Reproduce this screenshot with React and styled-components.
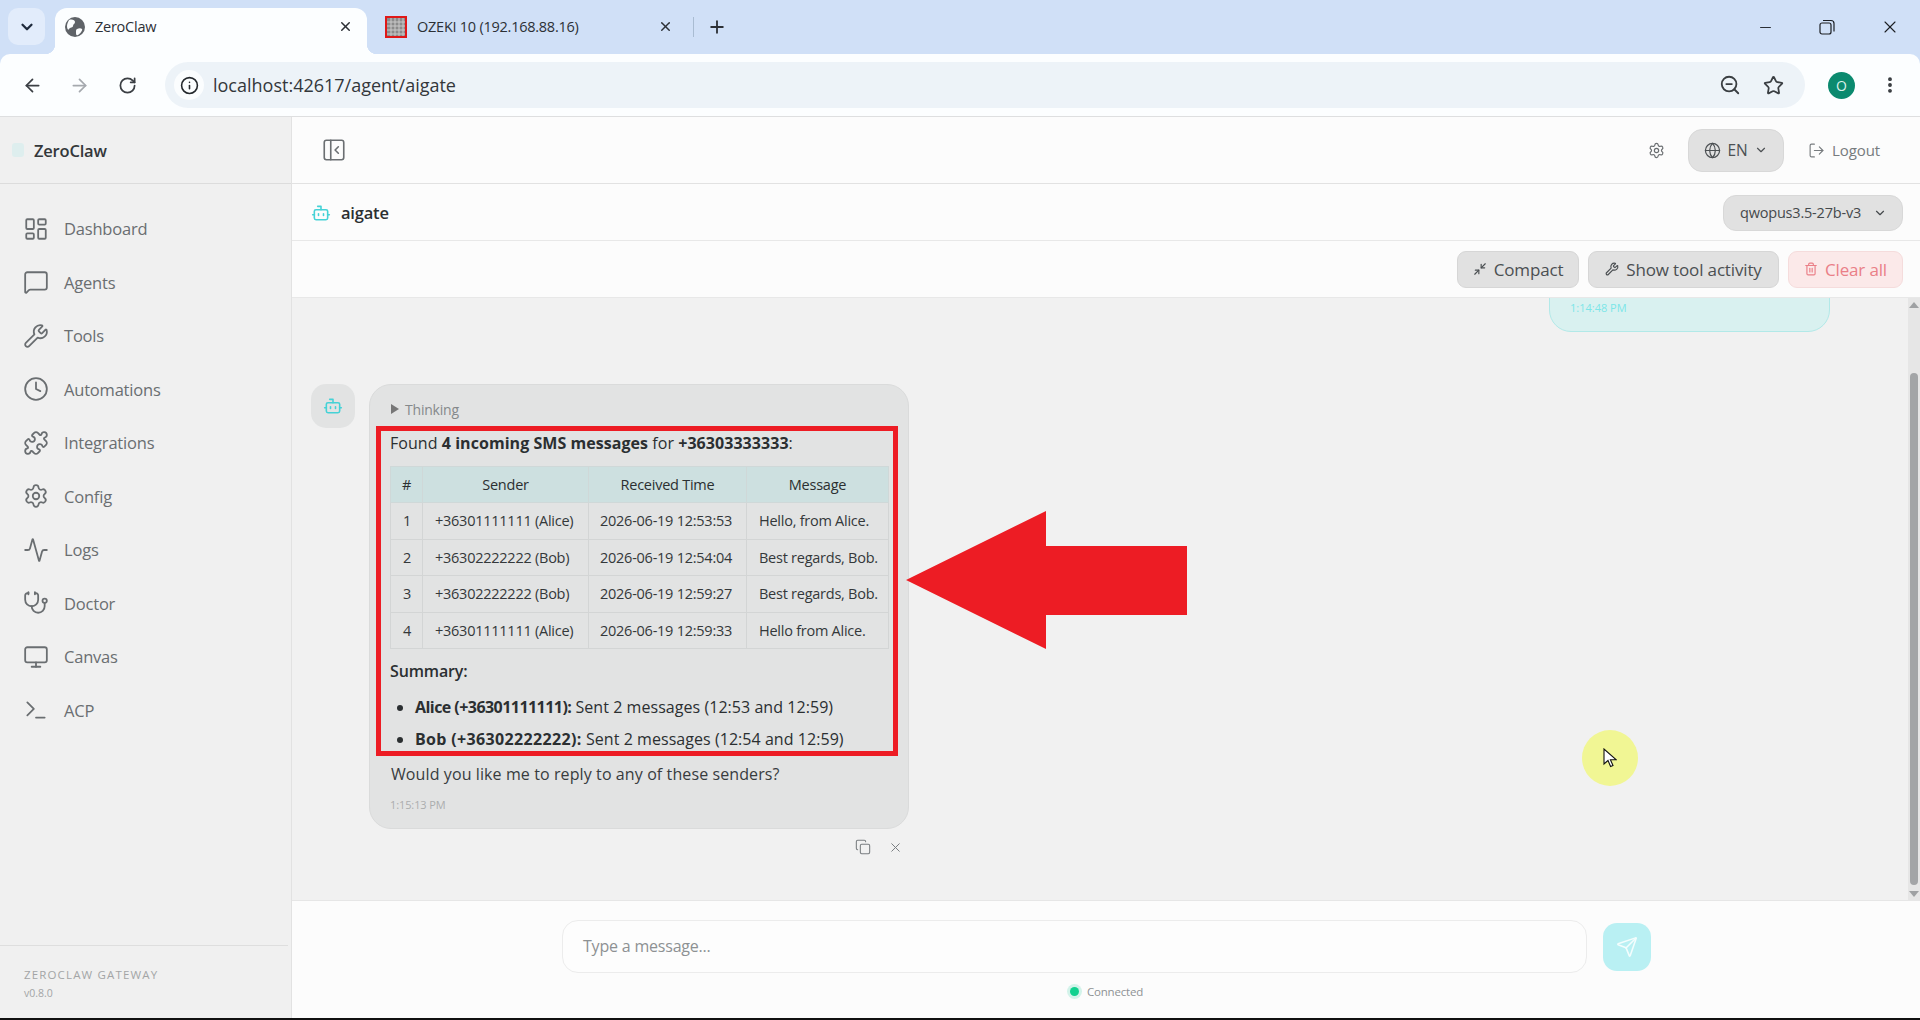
import React from "react";
import styled, { createGlobalStyle } from "styled-components";
import {
  Activity,
  ArrowLeft,
  ArrowRight,
  Bot,
  ChevronDown,
  Clock,
  Copy,
  Globe,
  Info,
  LayoutDashboard,
  LogOut,
  MessageSquare,
  Minimize2,
  Minus,
  Monitor,
  MoreVertical,
  PanelLeftClose,
  Plus,
  Puzzle,
  RotateCw,
  Send,
  Settings,
  Star,
  Stethoscope,
  Terminal,
  Trash2,
  Wrench,
  X,
  ZoomOut,
} from "lucide-react";

const GlobalStyle = createGlobalStyle`
  html, body {
    margin: 0;
    height: 100%;
    overflow: hidden;
    background: #fff;
  }
  body {
    font-family: "Open Sans", "Liberation Sans", sans-serif;
    color: #2b2f31;
  }
  * { box-sizing: border-box; }
`;

const Screen = styled.div`
  position: relative;
  width: 100vw;
  height: 100vh;
  display: flex;
  flex-direction: column;
  background: #d0e0f7;
  border-bottom: 2px solid #111;
`;

/* browser chrome */
const TabStrip = styled.div`
  height: 54px;
  flex: none;
  display: flex;
  align-items: flex-end;
  padding-left: 8px;
  background: #d0e0f7;
`;
const TabSearch = styled.div`
  width: 37px;
  height: 37px;
  margin-bottom: 9px;
  border-radius: 10px;
  background: #e2ecfb;
  display: flex;
  align-items: center;
  justify-content: center;
  color: #1f2a3c;
`;
const Tab = styled.div`
  position: relative;
  width: ${(p) => p.$width}px;
  height: 46px;
  margin-left: ${(p) => p.$gap}px;
  padding: 0 14px 9px 10px;
  display: flex;
  align-items: center;
  gap: 10px;
  border-radius: 12px 12px 0 0;
  background: ${(p) => (p.$active ? "#fcfeff" : "transparent")};
  font-size: 14.5px;
  letter-spacing: -0.25px;
  color: #2c3036;
  ${(p) =>
    p.$active &&
    `
    &::before, &::after {
      content: "";
      position: absolute;
      bottom: 0;
      width: 10px;
      height: 10px;
    }
    &::before {
      left: -10px;
      background: radial-gradient(circle at 0 0, transparent 10px, #fcfeff 10.5px);
    }
    &::after {
      right: -10px;
      background: radial-gradient(circle at 100% 0, transparent 10px, #fcfeff 10.5px);
    }
  `}
`;
const TabTitle = styled.span`
  flex: 1;
  white-space: nowrap;
`;
const TabDivider = styled.div`
  width: 1px;
  height: 20px;
  margin: 0 0 17px 6px;
  background: #a9bcd2;
`;
const NewTab = styled.div`
  margin: 0 0 17px 13px;
  display: flex;
  color: #2c3036;
`;
const WindowControls = styled.div`
  margin-left: auto;
  height: 100%;
  display: flex;
  align-items: center;
  gap: 45px;
  padding-right: 20px;
  color: #1c1f23;
`;
const AddressRow = styled.div`
  height: 63px;
  flex: none;
  display: flex;
  align-items: center;
  padding-left: 22px;
  background: #fcfeff;
  border-bottom: 1px solid #dedfe0;
  border-radius: 10px 10px 0 0;
`;
const NavButton = styled.div`
  display: flex;
  width: ${(p) => p.$width}px;
  color: ${(p) => (p.$dim ? "#a5a9ae" : "#3b3f44")};
`;
const Omnibox = styled.div`
  width: 1640px;
  height: 46px;
  margin-left: 15px;
  display: flex;
  align-items: center;
  padding: 0 21px 0 9px;
  border-radius: 23px;
  background: #edf3f8;
  color: #24282c;
`;
const SiteInfo = styled.div`
  width: 30px;
  height: 30px;
  margin-right: 9px;
  display: flex;
  align-items: center;
  justify-content: center;
  border-radius: 50%;
  background: #fbfdfe;
`;
const Url = styled.span`
  flex: 1;
  font-size: 18px;
  color: #33373b;
`;
const OmniActions = styled.div`
  display: flex;
  align-items: center;
  gap: 22px;
  color: #3a3e42;
`;
const Avatar = styled.div`
  width: 27px;
  height: 27px;
  margin-left: 23px;
  display: flex;
  align-items: center;
  justify-content: center;
  border-radius: 50%;
  background: #0b8a6f;
  color: #d9f1ea;
  font-size: 14px;
`;
const ChromeMenu = styled.div`
  display: flex;
  margin-left: 25px;
  color: #33373b;
`;

/* page */
const AppBody = styled.div`
  flex: 1;
  min-height: 0;
  display: flex;
`;
const Sidebar = styled.aside`
  width: 292px;
  flex: none;
  display: flex;
  flex-direction: column;
  background: #f0f0f0;
  border-right: 1px solid #e2e2e2;
`;
const Brand = styled.div`
  height: 67px;
  flex: none;
  display: flex;
  align-items: center;
  gap: 10px;
  padding-left: 12px;
  border-bottom: 1px solid #dcdcdc;
  font-size: 16.5px;
  font-weight: 600;
  letter-spacing: -0.2px;
  color: #33373a;
`;
const BrandMark = styled.div`
  width: 12px;
  height: 14px;
  border-radius: 3px;
  background: #deeeee;
`;
const Nav = styled.nav`
  padding-top: 18px;
`;
const NavItem = styled.div`
  height: 53.5px;
  display: flex;
  align-items: center;
  gap: 15px;
  padding-left: 23px;
  font-size: 16.5px;
  font-weight: 500;
  letter-spacing: -0.2px;
  color: #6a6e71;
`;
const SidebarFooter = styled.div`
  margin-top: auto;
  margin-right: 3px;
  height: 73px;
  padding: 21px 0 0 24px;
  border-top: 1px solid #dedede;
`;
const GatewayLabel = styled.div`
  font-size: 11.5px;
  line-height: 16px;
  letter-spacing: 1.15px;
  color: #a3a5a6;
`;
const VersionLabel = styled.div`
  font-size: 10.5px;
  line-height: 16px;
  margin-top: 2px;
  color: #a3a5a6;
`;
const Main = styled.main`
  flex: 1;
  min-width: 0;
  display: flex;
  flex-direction: column;
  background: #fcfcfc;
`;
const Header = styled.header`
  height: 67px;
  flex: none;
  display: flex;
  align-items: center;
  padding: 0 40px 0 29px;
  border-bottom: 1px solid #e2e2e2;
  color: #6b6f72;
`;
const HeaderSpacer = styled.div`
  flex: 1;
`;
const LangButton = styled.div`
  width: 96px;
  height: 43px;
  margin: 0 24px 0 23px;
  display: flex;
  align-items: center;
  justify-content: center;
  gap: 6px;
  border: 1px solid #d8d8d8;
  border-radius: 14px;
  background: #e1e1e1;
  font-size: 15.5px;
  color: #4c5053;
`;
const LogoutButton = styled.div`
  display: flex;
  align-items: center;
  gap: 7px;
  font-size: 15px;
  letter-spacing: -0.1px;
  color: #777b7e;
`;
const AgentBar = styled.div`
  height: 57px;
  flex: none;
  display: flex;
  align-items: center;
  padding: 1px 17px 0 19px;
  border-bottom: 1px solid #e8e8e8;
`;
const AgentName = styled.span`
  margin-left: 10px;
  font-size: 16.5px;
  font-weight: 600;
  letter-spacing: -0.2px;
  color: #2b2f31;
`;
const ModelSelect = styled.div`
  width: 180px;
  height: 36px;
  margin-left: auto;
  display: flex;
  align-items: center;
  justify-content: space-between;
  padding: 0 15px 0 16px;
  border: 1px solid #d8d8d8;
  border-radius: 13px;
  background: #e1e1e1;
  font-size: 14.5px;
  letter-spacing: -0.2px;
  color: #45494c;
`;
const Toolbar = styled.div`
  height: 57px;
  flex: none;
  display: flex;
  align-items: center;
  justify-content: flex-end;
  gap: 9px;
  padding-right: 17px;
  border-bottom: 1px solid #e8e8e8;
`;
const ToolButton = styled.div`
  width: ${(p) => p.$width}px;
  height: 37px;
  display: flex;
  align-items: center;
  justify-content: center;
  gap: 7px;
  border: 1px solid ${(p) => (p.$danger ? "#f5dcdc" : "#d6d6d6")};
  border-radius: 9px;
  background: ${(p) => (p.$danger ? "#fbe9e9" : "#e1e1e1")};
  font-size: 17px;
  font-weight: 500;
  letter-spacing: -0.15px;
  color: ${(p) => (p.$danger ? "#ea7f87" : "#4b4f52")};
`;
const ChatPane = styled.div`
  flex: 1;
  min-height: 0;
  display: flex;
  background: #f1f1f1;
  border-bottom: 1px solid #e6e6e6;
`;
const Messages = styled.div`
  flex: 1;
  min-width: 0;
  display: flex;
  flex-direction: column;
  justify-content: flex-end;
  overflow: hidden;
  padding: 0 78px 44px 19px;
`;
const UserBubble = styled.div`
  align-self: flex-end;
  flex: none;
  width: 281px;
  height: 90px;
  padding: 57px 20px 0;
  border: 1px solid #b2e9e8;
  border-radius: 22px;
  background: #d9f1f0;
`;
const UserTime = styled.div`
  font-size: 11px;
  line-height: 16px;
  color: #7ce6e8;
`;
const AssistantRow = styled.div`
  flex: none;
  display: flex;
  gap: 14px;
  margin-top: 52px;
`;
const BotAvatar = styled.div`
  width: 44px;
  height: 44px;
  flex: none;
  display: flex;
  align-items: center;
  justify-content: center;
  border-radius: 15px;
  background: #e2e3e3;
  color: #45d2d6;
`;
const AssistantColumn = styled.div`
  width: 540px;
`;
const Bubble = styled.div`
  height: 445px;
  padding: 14px 21px 0;
  border: 1px solid #dadbdb;
  border-radius: 22px;
  background: #e2e3e3;
`;
const Thinking = styled.div`
  display: flex;
  align-items: center;
  gap: 6px;
  height: 20px;
  margin-bottom: 7px;
  font-size: 14px;
  letter-spacing: -0.2px;
  color: #85898b;
`;
const Caret = styled.span`
  width: 0;
  height: 0;
  border-left: 8px solid #777;
  border-top: 5px solid transparent;
  border-bottom: 5px solid transparent;
`;
const Highlight = styled.div`
  margin: 0 -11px 0 -15px;
  padding: 0 10px 1px 9px;
  border: 5px solid #ed1c24;
`;
const Lead = styled.p`
  margin: 0 0 11px;
  font-size: 16px;
  line-height: 24px;
  letter-spacing: 0.05px;
  white-space: nowrap;
`;
const SmsTable = styled.table`
  width: 498px;
  border-collapse: collapse;
  table-layout: fixed;
  font-size: 14.5px;
  letter-spacing: -0.25px;
  color: #34383a;
`;
const HeadCell = styled.th`
  height: 36px;
  padding: 0;
  border: 1px solid #cfd8d8;
  background: #cde0e0;
  font-weight: 500;
  text-align: center;
  width: ${(p) => p.$width}px;
  color: #2b2f31;
`;
const Cell = styled.td`
  height: 36.5px;
  padding: 0 0 0 ${(p) => p.$pad}px;
  border: 1px solid #d3d5d5;
  white-space: nowrap;
`;
const SummaryTitle = styled.p`
  margin: 12px 0 0;
  font-size: 16px;
  font-weight: 600;
  line-height: 20px;
  letter-spacing: -0.15px;
`;
const SummaryList = styled.ul`
  margin: 15px 0 0;
  padding: 0 0 0 25px;
`;
const SummaryItem = styled.li`
  font-size: 16px;
  line-height: 22px;
  letter-spacing: 0.05px;
  white-space: nowrap;
  & + & {
    margin-top: 10px;
  }
`;
const SummaryName = styled.strong`
  letter-spacing: ${(p) => p.$spacing}px;
`;
const Question = styled.p`
  margin: 6px 0 0;
  font-size: 16px;
  line-height: 24px;
  letter-spacing: 0.1px;
  color: #383c3e;
`;
const Timestamp = styled.div`
  margin: 12px 0 0 -1px;
  font-size: 11px;
  line-height: 14px;
  letter-spacing: -0.1px;
  color: #abadae;
`;
const MessageActions = styled.div`
  height: 18px;
  margin-top: 9px;
  padding-right: 6px;
  display: flex;
  justify-content: flex-end;
  align-items: center;
  gap: 17px;
  color: #7a7e81;
`;
const ScrollTrack = styled.div`
  width: 12px;
  flex: none;
  display: flex;
  flex-direction: column;
  align-items: center;
  padding: 4px 0 3px;
  background: #e6e6e6;
`;
const ScrollArrow = styled.span`
  width: 0;
  height: 0;
  flex: none;
  border-left: 5px solid transparent;
  border-right: 5px solid transparent;
  ${(p) => (p.$down ? "border-top" : "border-bottom")}: 6px solid #9fa1a3;
`;
const ScrollThumb = styled.div`
  width: 8px;
  height: 512px;
  margin-top: 65px;
  border-radius: 4px;
  background: #a3a5a7;
`;
const ScrollGap = styled.div`
  flex: 1;
`;
const Composer = styled.div`
  height: 117px;
  flex: none;
  display: flex;
  flex-direction: column;
  align-items: center;
  padding: 19px 0 0 1px;
`;
const InputRow = styled.div`
  display: flex;
  align-items: center;
  gap: 16px;
`;
const MessageInput = styled.div`
  width: 1025px;
  height: 53px;
  display: flex;
  align-items: center;
  padding: 0 0 2px 20px;
  border: 1px solid #ececec;
  border-radius: 16px;
  background: #fdfdfd;
  font-size: 16px;
  letter-spacing: -0.2px;
  color: #8d9193;
`;
const SendButton = styled.div`
  width: 48px;
  height: 48px;
  display: flex;
  align-items: center;
  justify-content: center;
  border-radius: 14px;
  background: #b9f0f3;
  color: #f3fdfd;
`;
const Status = styled.div`
  display: flex;
  align-items: center;
  gap: 8px;
  margin-top: 11px;
  font-size: 11.5px;
  letter-spacing: -0.2px;
  color: #8e9294;
`;
const StatusDot = styled.span`
  width: 9px;
  height: 9px;
  border-radius: 50%;
  background: #12d18f;
  box-shadow: 0 0 0 3px #d3f3ea;
`;

/* overlays from the screen recording */
const RedArrow = styled.svg`
  position: absolute;
  left: 906px;
  top: 511px;
`;
const CursorHalo = styled.div`
  position: absolute;
  left: 1582px;
  top: 730px;
  width: 56px;
  height: 56px;
  border-radius: 50%;
  background: #f1f694;
`;
const CursorArrow = styled.svg`
  position: absolute;
  left: 1603px;
  top: 748px;
`;

const GlobeFavicon = () => (
  <svg width="20" height="20" viewBox="0 0 20 20">
    <circle cx="10" cy="10" r="10" fill="#5f6368" />
    <path d="M4 3c3-1 6 0 6 2s-2 2-2 4-3 1-4 3-2-1-2-3 1-4 2-6zM12 12c2-1 4-1 5 0s-2 5-4 6-2-1-2-3 0-2 1-3z" fill="#fcfeff" />
  </svg>
);

const OzekiFavicon = () => (
  <svg width="22" height="22" viewBox="0 0 22 22">
    <rect x="1" y="1" width="20" height="20" fill="#8b8b8b" stroke="#e01818" strokeWidth="2" />
    <path d="M6 2v18M10 2v18M14 2v18M18 2v18M2 6h18M2 10h18M2 14h18M2 18h18" stroke="#c9c9c9" strokeWidth="1" />
  </svg>
);

const RestoreIcon = () => (
  <svg width="16" height="16" viewBox="0 0 16 16" fill="none" stroke="currentColor" strokeWidth="1.2">
    <rect x="1" y="4" width="11" height="11" rx="2" />
    <path d="M4 1.5h8a3 3 0 0 1 3 3v8" />
  </svg>
);

const navItems = [
  ["Dashboard", LayoutDashboard],
  ["Agents", MessageSquare],
  ["Tools", Wrench],
  ["Automations", Clock],
  ["Integrations", Puzzle],
  ["Config", Settings],
  ["Logs", Activity],
  ["Doctor", Stethoscope],
  ["Canvas", Monitor],
  ["ACP", Terminal],
];

const rows = [
  ["1", "+36301111111 (Alice)", "2026-06-19 12:53:53", "Hello, from Alice."],
  ["2", "+36302222222 (Bob)", "2026-06-19 12:54:04", "Best regards, Bob."],
  ["3", "+36302222222 (Bob)", "2026-06-19 12:59:27", "Best regards, Bob."],
  ["4", "+36301111111 (Alice)", "2026-06-19 12:59:33", "Hello from Alice."],
];

export default function App() {
  return (
    <Screen>
      <GlobalStyle />
      <TabStrip>
        <TabSearch>
          <ChevronDown size={18} strokeWidth={3} />
        </TabSearch>
        <Tab $active $width={312} $gap={10}>
          <GlobeFavicon />
          <TabTitle>ZeroClaw</TabTitle>
          <X size={15} strokeWidth={2.4} />
        </Tab>
        <Tab $width={312} $gap={8}>
          <OzekiFavicon />
          <TabTitle>OZEKI 10 (192.168.88.16)</TabTitle>
          <X size={15} strokeWidth={2.4} />
        </Tab>
        <TabDivider />
        <NewTab>
          <Plus size={20} strokeWidth={2.2} />
        </NewTab>
        <WindowControls>
          <Minus size={17} strokeWidth={1.3} />
          <RestoreIcon />
          <X size={20} strokeWidth={1.3} />
        </WindowControls>
      </TabStrip>
      <AddressRow>
        <NavButton $width={47}>
          <ArrowLeft size={21} strokeWidth={2} />
        </NavButton>
        <NavButton $dim $width={49}>
          <ArrowRight size={21} strokeWidth={2} />
        </NavButton>
        <NavButton $width={32}>
          <RotateCw size={19} strokeWidth={2.2} />
        </NavButton>
        <Omnibox>
          <SiteInfo>
            <Info size={19} strokeWidth={2} />
          </SiteInfo>
          <Url>localhost:42617/agent/aigate</Url>
          <OmniActions>
            <ZoomOut size={22} strokeWidth={2} />
            <Star size={21} strokeWidth={2} />
          </OmniActions>
        </Omnibox>
        <Avatar>O</Avatar>
        <ChromeMenu>
          <MoreVertical size={20} strokeWidth={2.6} />
        </ChromeMenu>
      </AddressRow>
      <AppBody>
        <Sidebar>
          <Brand>
            <BrandMark />
            ZeroClaw
          </Brand>
          <Nav>
            {navItems.map(([label, Icon]) => (
              <NavItem key={label}>
                <Icon size={26} strokeWidth={1.65} />
                {label}
              </NavItem>
            ))}
          </Nav>
          <SidebarFooter>
            <GatewayLabel>ZEROCLAW GATEWAY</GatewayLabel>
            <VersionLabel>v0.8.0</VersionLabel>
          </SidebarFooter>
        </Sidebar>
        <Main>
          <Header>
            <PanelLeftClose size={26} strokeWidth={1.5} />
            <HeaderSpacer />
            <Settings size={17} strokeWidth={1.7} />
            <LangButton>
              <Globe size={17} strokeWidth={1.7} />
              EN
              <ChevronDown size={14} strokeWidth={2} />
            </LangButton>
            <LogoutButton>
              <LogOut size={17} strokeWidth={1.6} />
              Logout
            </LogoutButton>
          </Header>
          <AgentBar>
            <Bot size={20} strokeWidth={1.9} color="#45d2d6" />
            <AgentName>aigate</AgentName>
            <ModelSelect>
              qwopus3.5-27b-v3
              <ChevronDown size={14} strokeWidth={2} />
            </ModelSelect>
          </AgentBar>
          <Toolbar>
            <ToolButton $width={122}>
              <Minimize2 size={14} strokeWidth={2} />
              Compact
            </ToolButton>
            <ToolButton $width={191}>
              <Wrench size={14} strokeWidth={2} />
              Show tool activity
            </ToolButton>
            <ToolButton $danger $width={115}>
              <Trash2 size={14} strokeWidth={2} />
              Clear all
            </ToolButton>
          </Toolbar>
          <ChatPane>
            <Messages>
              <UserBubble>
                <UserTime>1:14:48 PM</UserTime>
              </UserBubble>
              <AssistantRow>
                <BotAvatar>
                  <Bot size={20} strokeWidth={1.9} />
                </BotAvatar>
                <AssistantColumn>
                  <Bubble>
                    <Thinking>
                      <Caret />
                      Thinking
                    </Thinking>
                    <Highlight>
                      <Lead>
                        Found <strong>4 incoming SMS messages</strong> for <strong>+36303333333</strong>:
                      </Lead>
                      <SmsTable>
                        <thead>
                          <tr>
                            <HeadCell $width={32}>#</HeadCell>
                            <HeadCell $width={166}>Sender</HeadCell>
                            <HeadCell $width={158}>Received Time</HeadCell>
                            <HeadCell $width={142}>Message</HeadCell>
                          </tr>
                        </thead>
                        <tbody>
                          {rows.map(([n, sender, time, text]) => (
                            <tr key={n}>
                              <Cell $pad={12}>{n}</Cell>
                              <Cell $pad={12}>{sender}</Cell>
                              <Cell $pad={11}>{time}</Cell>
                              <Cell $pad={12}>{text}</Cell>
                            </tr>
                          ))}
                        </tbody>
                      </SmsTable>
                      <SummaryTitle>Summary:</SummaryTitle>
                      <SummaryList>
                        <SummaryItem>
                          <SummaryName $spacing={-0.55}>Alice (+36301111111):</SummaryName> Sent 2 messages (12:53 and 12:59)
                        </SummaryItem>
                        <SummaryItem>
                          <SummaryName $spacing={0.35}>Bob (+36302222222):</SummaryName> Sent 2 messages (12:54 and 12:59)
                        </SummaryItem>
                      </SummaryList>
                    </Highlight>
                    <Question>Would you like me to reply to any of these senders?</Question>
                    <Timestamp>1:15:13 PM</Timestamp>
                  </Bubble>
                  <MessageActions>
                    <Copy size={16} strokeWidth={1.6} />
                    <X size={15} strokeWidth={1.6} />
                  </MessageActions>
                </AssistantColumn>
              </AssistantRow>
            </Messages>
            <ScrollTrack>
              <ScrollArrow />
              <ScrollThumb />
              <ScrollGap />
              <ScrollArrow $down />
            </ScrollTrack>
          </ChatPane>
          <Composer>
            <InputRow>
              <MessageInput>Type a message...</MessageInput>
              <SendButton>
                <Send size={22} strokeWidth={1.7} />
              </SendButton>
            </InputRow>
            <Status>
              <StatusDot />
              Connected
            </Status>
          </Composer>
        </Main>
      </AppBody>
      <RedArrow width="282" height="138" viewBox="0 0 282 138">
        <path d="M0 69 140 0V35H281V104H140V138Z" fill="#ed1c24" />
      </RedArrow>
      <CursorHalo />
      <CursorArrow width="14" height="20" viewBox="0 0 14 20">
        <path d="M1 1v15l4-3.5 2.6 6 2.4-1-2.6-5.8H13Z" fill="#fff" stroke="#111" strokeWidth="1.1" />
      </CursorArrow>
    </Screen>
  );
}
